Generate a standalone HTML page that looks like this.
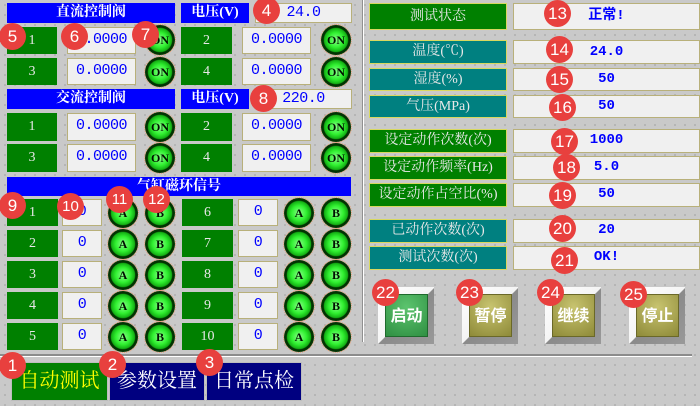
<!DOCTYPE html>
<html><head><meta charset="utf-8"><style>
*{margin:0;padding:0;box-sizing:border-box}
body{width:700px;height:406px;overflow:hidden;position:relative;background-color:#c9c9c9;background-image:radial-gradient(circle,#9a9a9a 0.6px,transparent 0.9px);background-size:10px 10px;font-family:"Liberation Serif","Noto Serif CJK SC","Noto Sans CJK SC",serif}
div{position:absolute}
.hb{background:#0000ff;color:#fff;font-weight:bold;font-size:14px;text-align:center;line-height:20px;font-family:"Liberation Serif","Noto Serif CJK SC",serif}
.g{background:#008000;color:#e8e8e8;font-size:14px;text-align:center;line-height:27px}
.v{background:#f0f0f0;border:1.5px solid #b8b07a;color:#0000ff;font-size:15px;text-align:center;line-height:24px;font-family:"Liberation Mono",monospace;letter-spacing:-0.5px}
.c{width:30px;height:30px;border-radius:50%;background:radial-gradient(circle,#8aff8a 0,#30f030 35%,#14b014 55%,#003000 60%,#0c3c0c 78%,#041404 100%);color:#001000;font-size:12px;font-weight:bold;text-align:center;line-height:30px;outline:1px dotted #e89a70}
.rl{color:#e8e8e8;font-size:14px;text-align:center;line-height:24px;border:1px solid #d8d860}
.gr{background:#008000}.tl{background:#008080}
.rv{background:#f0f0f0;border:1.5px solid #b8b07a;color:#0000ff;font-weight:bold;font-size:14px;text-align:center;line-height:22px;font-family:"Liberation Mono","Noto Sans CJK SC",monospace}
.b{width:56px;height:57px;background:linear-gradient(135deg,#fff 0,#f4f4f4 50%,#8a8a8a 51%,#999 100%)}
.bf{left:7px;top:7px;width:43px;height:43px;color:#fff;font-size:16px;font-weight:bold;text-align:center;line-height:43px;font-family:"Liberation Sans","Noto Sans CJK SC",sans-serif}
.n{width:27px;height:27px;border-radius:50%;background:#e8403e;color:#fff;font-family:"Liberation Sans",sans-serif;font-size:17px;text-align:center;line-height:27px;z-index:5}
.tab{height:39px;border:1.5px solid #bdbdbd;font-size:20px;text-align:center;line-height:36px;font-family:"Liberation Serif","Noto Serif CJK SC",serif}
</style></head><body>
<div style="left:362px;top:0;width:2px;height:342px;background:#909090;border-right:1px solid #fff"></div>
<div style="left:0;top:354px;width:692px;height:3px;background:#8c8c8c;border-bottom:1px solid #fff"></div>

<div class="hb" style="left:7px;top:3px;width:168px;height:20px">直流控制阀</div>
<div class="hb" style="left:181px;top:3px;width:68px;height:20px">电压(V)</div>
<div class="v" style="left:255px;top:3px;width:97px;height:20px;line-height:17px">24.0</div>
<div class="g" style="left:7px;top:27px;width:50px;height:27px">1</div>
<div class="v" style="left:67px;top:27px;width:69px;height:27px">0.0000</div>
<div class="c" style="left:145px;top:25px">ON</div>
<div class="g" style="left:181px;top:27px;width:51px;height:27px">2</div>
<div class="v" style="left:242px;top:27px;width:69px;height:27px">0.0000</div>
<div class="c" style="left:321px;top:25px">ON</div>
<div class="g" style="left:7px;top:58px;width:50px;height:27px">3</div>
<div class="v" style="left:67px;top:58px;width:69px;height:27px">0.0000</div>
<div class="c" style="left:145px;top:57px">ON</div>
<div class="g" style="left:181px;top:58px;width:51px;height:27px">4</div>
<div class="v" style="left:242px;top:58px;width:69px;height:27px">0.0000</div>
<div class="c" style="left:321px;top:57px">ON</div>

<div class="hb" style="left:7px;top:89px;width:168px;height:20px">交流控制阀</div>
<div class="hb" style="left:181px;top:89px;width:68px;height:20px">电压(V)</div>
<div class="v" style="left:255px;top:89px;width:97px;height:20px;line-height:17px">220.0</div>
<div class="g" style="left:7px;top:113px;width:50px;height:28px">1</div>
<div class="v" style="left:67px;top:113px;width:69px;height:28px">0.0000</div>
<div class="c" style="left:145px;top:112px">ON</div>
<div class="g" style="left:181px;top:113px;width:51px;height:28px">2</div>
<div class="v" style="left:242px;top:113px;width:69px;height:28px">0.0000</div>
<div class="c" style="left:321px;top:112px">ON</div>
<div class="g" style="left:7px;top:144px;width:50px;height:28px">3</div>
<div class="v" style="left:67px;top:144px;width:69px;height:28px">0.0000</div>
<div class="c" style="left:145px;top:143px">ON</div>
<div class="g" style="left:181px;top:144px;width:51px;height:28px">4</div>
<div class="v" style="left:242px;top:144px;width:69px;height:28px">0.0000</div>
<div class="c" style="left:321px;top:143px">ON</div>

<div class="hb" style="left:7px;top:177px;width:344px;height:19px;line-height:19px">气缸磁环信号</div>

<div class="g" style="left:7px;top:199px;width:51px;height:27px">1</div><div class="v" style="left:62px;top:199px;width:40px;height:27px">0</div><div class="c" style="left:108px;top:198px">A</div><div class="c" style="left:145px;top:198px">B</div>
<div class="g" style="left:182px;top:199px;width:51px;height:27px">6</div><div class="v" style="left:238px;top:199px;width:40px;height:27px">0</div><div class="c" style="left:284px;top:198px">A</div><div class="c" style="left:321px;top:198px">B</div>

<div class="g" style="left:7px;top:230px;width:51px;height:27px">2</div><div class="v" style="left:62px;top:230px;width:40px;height:27px">0</div><div class="c" style="left:108px;top:229px">A</div><div class="c" style="left:145px;top:229px">B</div>
<div class="g" style="left:182px;top:230px;width:51px;height:27px">7</div><div class="v" style="left:238px;top:230px;width:40px;height:27px">0</div><div class="c" style="left:284px;top:229px">A</div><div class="c" style="left:321px;top:229px">B</div>

<div class="g" style="left:7px;top:261px;width:51px;height:27px">3</div><div class="v" style="left:62px;top:261px;width:40px;height:27px">0</div><div class="c" style="left:108px;top:260px">A</div><div class="c" style="left:145px;top:260px">B</div>
<div class="g" style="left:182px;top:261px;width:51px;height:27px">8</div><div class="v" style="left:238px;top:261px;width:40px;height:27px">0</div><div class="c" style="left:284px;top:260px">A</div><div class="c" style="left:321px;top:260px">B</div>

<div class="g" style="left:7px;top:292px;width:51px;height:27px">4</div><div class="v" style="left:62px;top:292px;width:40px;height:27px">0</div><div class="c" style="left:108px;top:291px">A</div><div class="c" style="left:145px;top:291px">B</div>
<div class="g" style="left:182px;top:292px;width:51px;height:27px">9</div><div class="v" style="left:238px;top:292px;width:40px;height:27px">0</div><div class="c" style="left:284px;top:291px">A</div><div class="c" style="left:321px;top:291px">B</div>

<div class="g" style="left:7px;top:323px;width:51px;height:27px">5</div><div class="v" style="left:62px;top:323px;width:40px;height:27px">0</div><div class="c" style="left:108px;top:322px">A</div><div class="c" style="left:145px;top:322px">B</div>
<div class="g" style="left:182px;top:323px;width:51px;height:27px">10</div><div class="v" style="left:238px;top:323px;width:40px;height:27px">0</div><div class="c" style="left:284px;top:322px">A</div><div class="c" style="left:321px;top:322px">B</div>

<div class="rl gr" style="left:369px;top:3px;width:138px;height:27px;line-height:25px">测试状态</div>
<div class="rv" style="left:513px;top:3px;width:187px;height:27px;line-height:24px">正常!</div>
<div class="rl tl" style="left:369px;top:40px;width:138px;height:24px;line-height:22px">温度(℃)</div>
<div class="rv" style="left:513px;top:40px;width:187px;height:24px">24.0</div>
<div class="rl tl" style="left:369px;top:68px;width:138px;height:23px;line-height:21px">湿度(%)</div>
<div class="rv" style="left:513px;top:68px;width:187px;height:23px;line-height:20px">50</div>
<div class="rl tl" style="left:369px;top:95px;width:138px;height:23px;line-height:21px">气压(MPa)</div>
<div class="rv" style="left:513px;top:95px;width:187px;height:23px;line-height:20px">50</div>
<div class="rl gr" style="left:369px;top:129px;width:138px;height:24px;line-height:22px">设定动作次数(次)</div>
<div class="rv" style="left:513px;top:129px;width:187px;height:24px;line-height:21px">1000</div>
<div class="rl gr" style="left:369px;top:156px;width:138px;height:24px;line-height:22px">设定动作频率(Hz)</div>
<div class="rv" style="left:513px;top:156px;width:187px;height:24px;line-height:21px">5.0</div>
<div class="rl gr" style="left:369px;top:183px;width:138px;height:24px;line-height:22px">设定动作占空比(%)</div>
<div class="rv" style="left:513px;top:183px;width:187px;height:24px;line-height:21px">50</div>
<div class="rl tl" style="left:369px;top:219px;width:138px;height:24px;line-height:22px">已动作次数(次)</div>
<div class="rv" style="left:513px;top:219px;width:187px;height:24px;line-height:21px">20</div>
<div class="rl tl" style="left:369px;top:246px;width:138px;height:24px;line-height:22px">测试次数(次)</div>
<div class="rv" style="left:513px;top:246px;width:187px;height:24px;line-height:21px">OK!</div>

<div class="b" style="left:378px;top:287px"><div class="bf" style="background:radial-gradient(circle at 50% 30%,#5cc46e,#2f8f42);border:1px solid #1e6a2c">启动</div></div>
<div class="b" style="left:462px;top:287px"><div class="bf" style="background:radial-gradient(circle at 50% 30%,#c8c470,#8e8a38);border:1px solid #6a6828">暂停</div></div>
<div class="b" style="left:545px;top:287px"><div class="bf" style="background:radial-gradient(circle at 50% 30%,#c8c470,#8e8a38);border:1px solid #6a6828">继续</div></div>
<div class="b" style="left:629px;top:287px"><div class="bf" style="background:radial-gradient(circle at 50% 30%,#c8c470,#8e8a38);border:1px solid #6a6828">停止</div></div>

<div class="tab" style="left:11px;top:362px;width:97px;background:#008000;color:#ffff00">自动测试</div>
<div class="tab" style="left:109px;top:362px;width:96px;background:#000080;color:#fff">参数设置</div>
<div class="tab" style="left:206px;top:362px;width:96px;background:#000080;color:#fff">日常点检</div>

<div class="n" style="left:-1px;top:352px">1</div>
<div class="n" style="left:99px;top:351px">2</div>
<div class="n" style="left:196px;top:349px">3</div>
<div class="n" style="left:253px;top:-3px">4</div>
<div class="n" style="left:-1px;top:23px">5</div>
<div class="n" style="left:61px;top:23px">6</div>
<div class="n" style="left:132px;top:21px">7</div>
<div class="n" style="left:250px;top:85px">8</div>
<div class="n" style="left:-1px;top:192px">9</div>
<div class="n" style="left:57px;top:193px;font-size:15px">10</div>
<div class="n" style="left:106px;top:186px;font-size:15px">11</div>
<div class="n" style="left:143px;top:186px;font-size:15px">12</div>
<div class="n" style="left:544px;top:0">13</div>
<div class="n" style="left:546px;top:36px">14</div>
<div class="n" style="left:546px;top:66px">15</div>
<div class="n" style="left:549px;top:94px">16</div>
<div class="n" style="left:551px;top:128px">17</div>
<div class="n" style="left:553px;top:154px">18</div>
<div class="n" style="left:549px;top:182px">19</div>
<div class="n" style="left:549px;top:215px">20</div>
<div class="n" style="left:551px;top:247px">21</div>
<div class="n" style="left:372px;top:279px">22</div>
<div class="n" style="left:456px;top:279px">23</div>
<div class="n" style="left:537px;top:279px">24</div>
<div class="n" style="left:620px;top:281px">25</div>
</body></html>
